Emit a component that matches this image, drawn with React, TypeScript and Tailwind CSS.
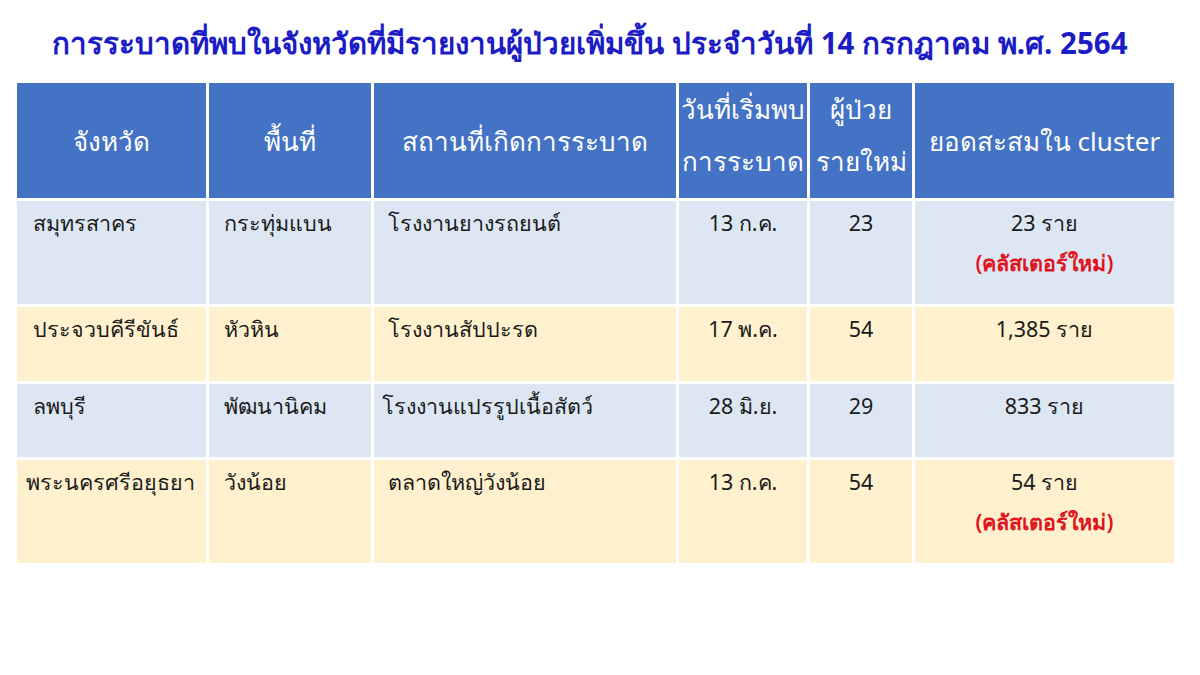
const headers = [
  { lines: ['จังหวัด'] },
  { lines: ['พื้นที่'] },
  { lines: ['สถานที่เกิดการระบาด'] },
  { lines: ['วันที่เริ่มพบ', 'การระบาด'] },
  { lines: ['ผู้ป่วย', 'รายใหม่'] },
  { lines: ['ยอดสะสมใน cluster'] },
];

const rows = [
  {
    province: 'สมุทรสาคร',
    area: 'กระทุ่มแบน',
    place: 'โรงงานยางรถยนต์',
    date: '13 ก.ค.',
    cases: '23',
    total: '23 ราย',
    isNew: true,
    bg: 'bg-[#dde7f4]',
    h: 'h-[103px]',
  },
  {
    province: 'ประจวบคีรีขันธ์',
    area: 'หัวหิน',
    place: 'โรงงานสัปปะรด',
    date: '17 พ.ค.',
    cases: '54',
    total: '1,385 ราย',
    isNew: false,
    bg: 'bg-[#fff1cd]',
    h: 'h-[74px]',
  },
  {
    province: 'ลพบุรี',
    area: 'พัฒนานิคม',
    place: 'โรงงานแปรรูปเนื้อสัตว์',
    date: '28 มิ.ย.',
    cases: '29',
    total: '833 ราย',
    isNew: false,
    bg: 'bg-[#dde7f4]',
    h: 'h-[73px]',
  },
  {
    province: 'พระนครศรีอยุธยา',
    area: 'วังน้อย',
    place: 'ตลาดใหญ่วังน้อย',
    date: '13 ก.ค.',
    cases: '54',
    total: '54 ราย',
    isNew: true,
    bg: 'bg-[#fff1cd]',
    h: 'h-[103px]',
  },
];

const App = () => {
  return (
    <div
      className="w-[1200px] h-[675px] bg-white overflow-hidden"
      style={{ fontFamily: 'Tahoma, "Noto Sans", "DejaVu Sans", sans-serif' }}
    >
      {/* Title */}
      <h1 className="pt-[24px] pr-[20px] h-[83px] text-center text-[29.5px] font-bold text-[#1c1cc4] leading-[38px] whitespace-nowrap">
        การระบาดที่พบในจังหวัดที่มีรายงานผู้ป่วยเพิ่มขึ้น ประจำวันที่ 14 กรกฎาคม พ.ศ. 2564
      </h1>

      {/* Table */}
      <div className="ml-[17px] w-[1157px] grid grid-cols-[189px_162px_302px_128px_102px_259px] gap-[3px]">
        {headers.map((hd, i) => (
          <div
            key={i}
            className={`h-[115px] bg-[#4472c4] text-white text-[26px] flex flex-col items-center justify-center ${
              hd.lines.length > 1 ? 'leading-[52px] pb-[12px]' : 'leading-[54px]'
            }`}
          >
            {hd.lines.map((l) => (
              <div key={l} className="whitespace-nowrap">{l}</div>
            ))}
          </div>
        ))}

        {rows.map((r, i) => (
          <div key={i} className="contents text-[21.5px] text-[#1a1a1a] leading-[40px]">
            <div className={`${r.bg} ${r.h} ${i === 3 ? 'pl-[9px]' : 'pl-[16px]'} pt-[2px] whitespace-nowrap`}>
              {r.province}
            </div>
            <div className={`${r.bg} ${r.h} pl-[15px] pt-[2px] whitespace-nowrap`}>{r.area}</div>
            <div className={`${r.bg} ${r.h} ${i === 2 ? 'pl-[8px]' : 'pl-[14px]'} pt-[2px] whitespace-nowrap`}>
              {r.place}
            </div>
            <div className={`${r.bg} ${r.h} pt-[2px] text-center whitespace-nowrap`}>{r.date}</div>
            <div className={`${r.bg} ${r.h} pt-[2px] text-center`}>{r.cases}</div>
            <div className={`${r.bg} ${r.h} pt-[2px] text-center whitespace-nowrap`}>
              <div>{r.total}</div>
              {r.isNew && <div className="text-[#e0141e] font-semibold">(คลัสเตอร์ใหม่)</div>}
            </div>
          </div>
        ))}
      </div>
    </div>
  );
};

export default App;
